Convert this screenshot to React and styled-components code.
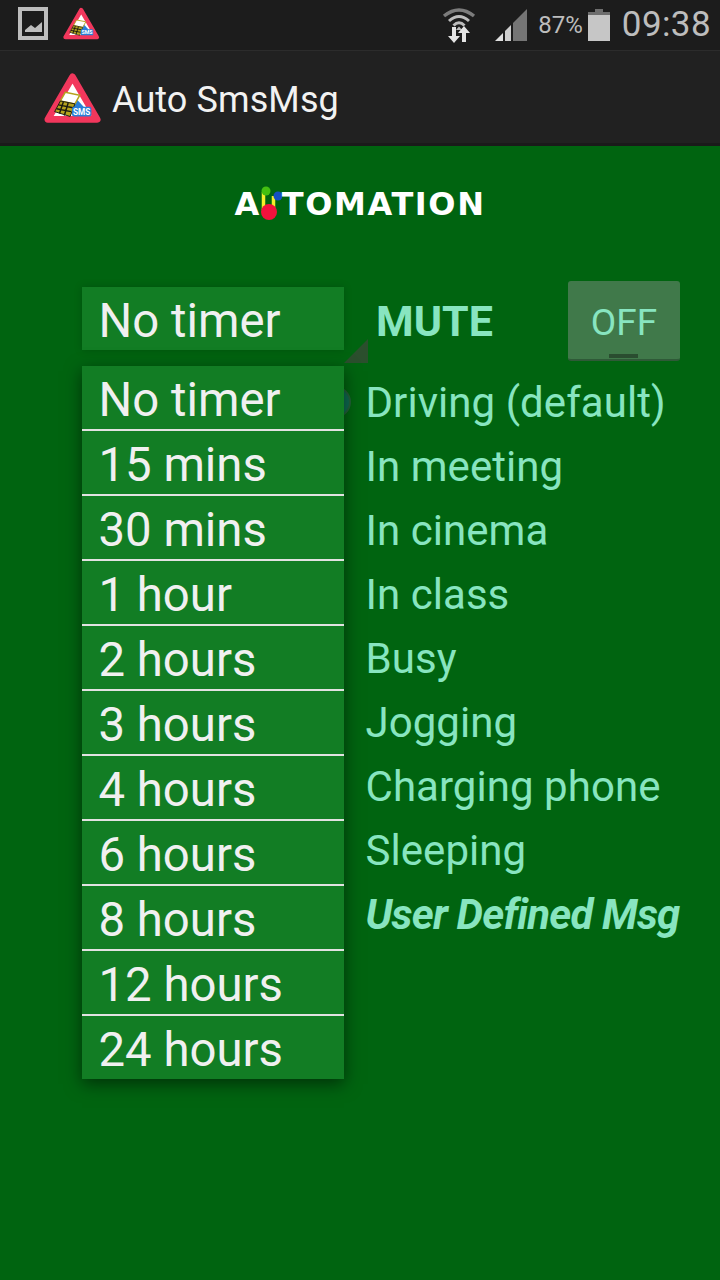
import React from 'react';
import styled, { createGlobalStyle } from 'styled-components';

const TIMERS = ['No timer', '15 mins', '30 mins', '1 hour', '2 hours', '3 hours', '4 hours', '6 hours', '8 hours', '12 hours', '24 hours'];
const MESSAGES = ['Driving (default)', 'In meeting', 'In cinema', 'In class', 'Busy', 'Jogging', 'Charging phone', 'Sleeping'];

const GlobalStyle = createGlobalStyle`
    html, body {
        margin: 0;
        padding: 0;
        background: #006410;
    }
    * {
        box-sizing: border-box;
    }
`;

const Screen = styled.div`
    width: 720px;
    height: 1280px;
    overflow: hidden;
    display: flex;
    flex-direction: column;
    background: #006410;
    font-family: Roboto, "Liberation Sans", sans-serif;
`;

const StatusBar = styled.div`
    height: 51px;
    flex: none;
    display: flex;
    align-items: center;
    padding: 0 9px 0 18px;
    background: #1c1c1c;
    border-bottom: 1px solid #2c2c2c;
    color: #bdbdbd;
`;

const StatusLeft = styled.div`
    display: flex;
    align-items: center;
    gap: 15px;
    flex: 1;
    margin-bottom: 2px;
`;

const Percent = styled.span`
    font-size: 24px;
    margin: 0 5px 1px 10px;
`;

const Clock = styled.span`
    font-size: 35px;
    margin: 0 0 1px 12px;
    letter-spacing: 0.4px;
`;

const ActionBar = styled.div`
    height: 95px;
    flex: none;
    display: flex;
    align-items: center;
    padding: 2px 0 0 44px;
    background: #212121;
    border-bottom: 3px solid #1a1a1a;
    position: relative;
`;

const AppTitle = styled.span`
    font-size: 36px;
    color: #f2f2f2;
    margin: 4px 0 0 10px;
    letter-spacing: 0.1px;
`;

const Content = styled.div`
    flex: 1;
    display: flex;
    flex-direction: column;
    position: relative;
`;

const LogoRow = styled.div`
    height: 135px;
    flex: none;
    display: flex;
    align-items: flex-start;
    justify-content: center;
    padding: 36px 0 0 0;
    font-family: "DejaVu Sans", sans-serif;
    font-weight: 700;
    font-size: 32px;
    line-height: 44px;
    letter-spacing: 1.6px;
    color: #fff;
`;

const LogoMark = styled.svg`
    width: 21px;
    height: 44px;
    flex: none;
`;

const ControlRow = styled.div`
    height: 80px;
    flex: none;
    display: flex;
    align-items: flex-start;
    padding-left: 82px;
`;

const Spinner = styled.div`
    width: 286px;
    height: 76px;
    flex: none;
    position: relative;
    margin-top: 6px;
`;

const SpinnerFace = styled.div`
    width: 262px;
    height: 63px;
    padding-left: 16.5px;
    background: #127d24;
    box-shadow: 0 0 8px rgba(0, 0, 0, 0.18);
    color: #f0f0f0;
    font-size: 47.3px;
    line-height: 69px;
`;

const SpinnerCorner = styled.div`
    position: absolute;
    right: 0;
    bottom: 0;
    width: 24px;
    height: 24px;
    background: #2b4f2d;
    clip-path: polygon(100% 0, 100% 100%, 0 100%);
`;

const MuteLabel = styled.span`
    width: 200px;
    flex: none;
    padding: 15px 0 0 8px;
    font-size: 43px;
    line-height: 50px;
    font-weight: 700;
    color: #88e5c0;
`;

const ToggleButton = styled.div`
    width: 112px;
    height: 80px;
    flex: none;
    position: relative;
    display: flex;
    align-items: center;
    justify-content: center;
    padding-top: 5px;
    background: #40794a;
    border-radius: 3px;
    border-bottom: 2px solid #2f5a38;
    font-size: 37px;
    color: #88e5c0;
`;

const ToggleIndicator = styled.span`
    position: absolute;
    left: 41px;
    bottom: 1px;
    width: 29px;
    height: 4px;
    background: #2a4d30;
`;

const MessageList = styled.div`
    display: flex;
    flex-direction: column;
    padding: 10px 0 0 365.5px;
`;

const MessageRow = styled.div`
    height: 64px;
    font-size: 42px;
    line-height: 64px;
    white-space: nowrap;
    color: #88e5c0;
    font-weight: ${p => (p.$custom ? 700 : 400)};
    font-style: ${p => (p.$custom ? 'italic' : 'normal')};
    letter-spacing: ${p => (p.$custom ? '-0.8px' : '0.05px')};
`;

const RadioPeek = styled.div`
    position: absolute;
    left: 319px;
    top: 240px;
    width: 32px;
    height: 32px;
    border-radius: 50%;
    background: #0d6b50;
    border: 2px solid #23603a;
`;

const Dropdown = styled.div`
    position: absolute;
    left: 82px;
    top: 220px;
    width: 262px;
    background: #127d24;
    box-shadow: 0 5px 16px rgba(0, 0, 0, 0.5);
`;

const DropdownItem = styled.div`
    height: 65px;
    padding-left: 16.5px;
    font-size: 47.3px;
    line-height: 69px;
    color: #f0f0f0;
    border-bottom: 2px solid #e2e2e2;

    &:last-child {
        height: 63px;
        border-bottom: 0;
    }
`;

const WifiSvg = styled.svg`
    flex: none;
    margin-right: 18px;
`;

const PictureIcon = () => (
    <svg width="30" height="34" viewBox="0 0 30 34">
        <rect x="0" y="0" width="30" height="33" fill="#bdbdbd" />
        <rect x="4" y="4" width="22" height="25" fill="#1c1c1c" />
        <path d="M7 25 L7 23 L13 18 L17 21 L24 15 L24 25 Z" fill="#bdbdbd" />
    </svg>
);

// the app's road sign logo, small variant in the status bar, big one in the action bar
const SignIcon = ({ size }) => (
    <svg width={size} height={size * 0.9} viewBox="0 0 60 54">
        <path d="M29.5 5 L55 49 L4 49 Z" fill="#fff" stroke="#f2375c" strokeWidth="7" strokeLinejoin="round" />
        <path d="M31 25 L41 36 L30 44 Z" fill="#2a7fd6" />
        <path d="M22 21 L37 24 L32 33 L17 30 Z" fill="#fff" stroke="#b5a21c" strokeWidth="1.5" />
        <path d="M17 30 L32 33 L27 46 L11 41 Z" fill="#b5a21c" stroke="#1a1a10" strokeWidth="1" />
        <path d="M15 34 L30 37 M13 38 L28 41 M20 31 L16 43 M25 32 L21 45" stroke="#1a1a10" strokeWidth="1.5" />
        <rect x="29" y="36" width="20" height="10" rx="2" fill="#2a7fd6" />
        <text x="39" y="44.5" textAnchor="middle" fontFamily="Roboto, sans-serif" fontWeight="700" fontSize="8.5" fill="#fff">SMS</text>
    </svg>
);

const WifiIcon = () => (
    <WifiSvg width="34" height="36" viewBox="0 0 34 36">
        <path d="M2 9 Q17 -3 32 9" fill="none" stroke="#7c7c7c" strokeWidth="3.5" />
        <path d="M7 14 Q17 5 27 14" fill="none" stroke="#bdbdbd" strokeWidth="3" />
        <path d="M11.5 18.5 Q17 13 22.5 18.5" fill="none" stroke="#bdbdbd" strokeWidth="3" />
        <path d="M14 23 L17 19.5 L20 23 Z" fill="#bdbdbd" />
        <path d="M10 20 h4 v9 h4 l-6 7 l-6 -7 h4 Z" fill="#e4e4e4" />
        <path d="M22 19 l6 7 h-4 v9 h-4 v-9 h-4 Z" fill="#e4e4e4" />
    </WifiSvg>
);

const SignalIcon = () => (
    <svg width="34" height="34" viewBox="0 0 34 34">
        <path d="M1 33 L9 25 L9 33 Z" fill="#e0e0e0" />
        <path d="M11 23 L17 17 L17 33 L11 33 Z" fill="#cfcfcf" />
        <path d="M19 15 L33 1 L33 33 L19 33 Z" fill="#757575" />
    </svg>
);

const BatteryIcon = () => (
    <svg width="22" height="32" viewBox="0 0 22 32">
        <path d="M7 0 H15 V3 H22 V32 H0 V3 H7 Z" fill="#c6c6c6" />
        <path d="M7 0 H15 V3 H22 V6 H0 V3 H7 Z" fill="#6e6e6e" />
    </svg>
);

const App = () => (
    <Screen>
        <GlobalStyle />
        <StatusBar>
            <StatusLeft>
                <PictureIcon />
                <SignIcon size={37} />
            </StatusLeft>
            <WifiIcon />
            <SignalIcon />
            <Percent>87%</Percent>
            <BatteryIcon />
            <Clock>09:38</Clock>
        </StatusBar>
        <ActionBar>
            <SignIcon size={58} />
            <AppTitle>Auto SmsMsg</AppTitle>
        </ActionBar>
        <Content>
            <LogoRow>
                <span>A</span>
                <LogoMark viewBox="0 0 21 44">
                    <path d="M2.5 10 L2.5 28 M12.5 14 L12.5 28" stroke="#f5f02a" strokeWidth="3.5" />
                    <circle cx="5" cy="9" r="4.5" fill="#43c010" />
                    <circle cx="17" cy="14" r="4.5" fill="#1450c0" />
                    <circle cx="8" cy="30" r="8" fill="#f2123c" />
                </LogoMark>
                <span>TOMATION</span>
            </LogoRow>
            <ControlRow>
                <Spinner>
                    <SpinnerFace>No timer</SpinnerFace>
                    <SpinnerCorner />
                </Spinner>
                <MuteLabel>MUTE</MuteLabel>
                <ToggleButton>
                    OFF
                    <ToggleIndicator />
                </ToggleButton>
            </ControlRow>
            <MessageList>
                {MESSAGES.map(text => (
                    <MessageRow key={text}>{text}</MessageRow>
                ))}
                <MessageRow $custom>User Defined Msg</MessageRow>
            </MessageList>
            <RadioPeek />
            <Dropdown>
                {TIMERS.map(text => (
                    <DropdownItem key={text}>{text}</DropdownItem>
                ))}
            </Dropdown>
        </Content>
    </Screen>
);

export default App;
